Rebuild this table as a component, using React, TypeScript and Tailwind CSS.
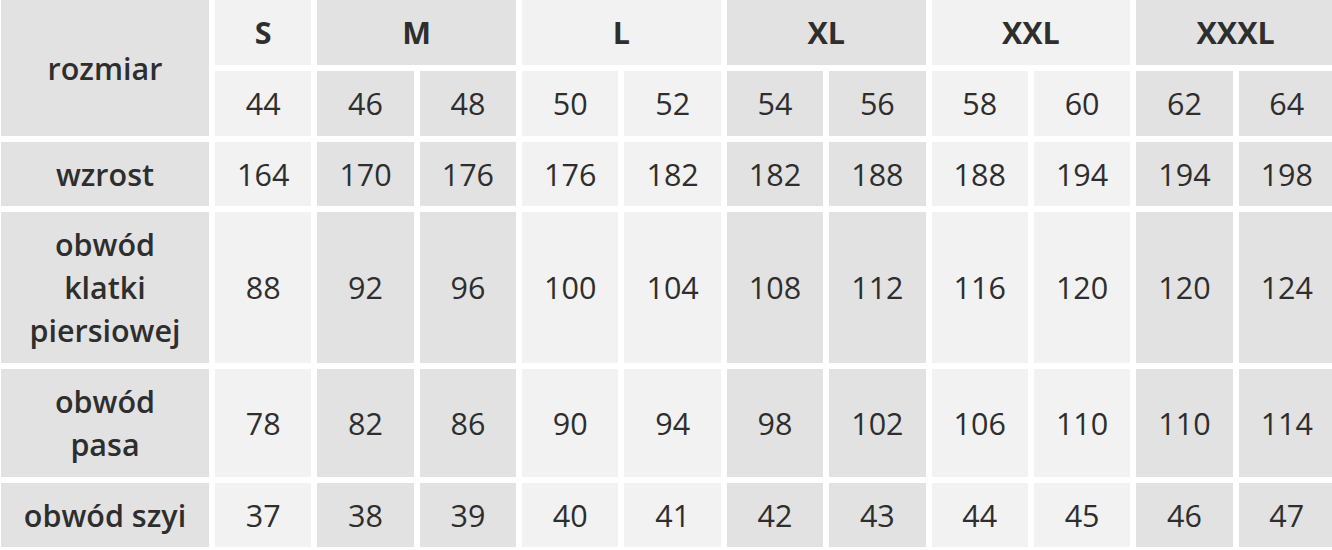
const sizes = [
  { label: "S", span: 1, light: true },
  { label: "M", span: 2, light: false },
  { label: "L", span: 2, light: true },
  { label: "XL", span: 2, light: false },
  { label: "XXL", span: 2, light: true },
  { label: "XXXL", span: 2, light: false },
];

const lightCols = [0, 3, 4, 7, 8];

const rows: { label: string[]; values: number[] }[] = [
  { label: ["wzrost"], values: [164, 170, 176, 176, 182, 182, 188, 188, 194, 194, 198] },
  { label: ["obwód", "klatki", "piersiowej"], values: [88, 92, 96, 100, 104, 108, 112, 116, 120, 120, 124] },
  { label: ["obwód", "pasa"], values: [78, 82, 86, 90, 94, 98, 102, 106, 110, 110, 114] },
  { label: ["obwód szyi"], values: [37, 38, 39, 40, 41, 42, 43, 44, 45, 46, 47] },
];

const euSizes = [44, 46, 48, 50, 52, 54, 56, 58, 60, 62, 64];

function cellBg(i: number) {
  return lightCols.includes(i) ? "bg-[#f2f2f2]" : "bg-[#e2e2e2]";
}

export default function App() {
  return (
    <div className="w-[1332px] h-[550px] overflow-hidden bg-white font-['Open_Sans',sans-serif] text-[#2e2e2e]">
      <div className="ml-[1px] grid w-[1334px] grid-cols-[208px_repeat(11,1fr)] grid-rows-[65px_65px_64px_151px_108px_64px] gap-[6px] text-center text-[30.5px] leading-[43px]">
        <div className="row-span-2 flex items-center justify-center bg-[#e2e2e2] font-semibold">
          rozmiar
        </div>
        {sizes.map((s) => (
          <div
            key={s.label}
            className={`flex items-center justify-center font-bold ${s.span === 2 ? "col-span-2" : ""} ${s.light ? "bg-[#f2f2f2]" : "bg-[#e2e2e2]"}`}
          >
            {s.label}
          </div>
        ))}
        {euSizes.map((n, i) => (
          <div key={n} className={`flex items-center justify-center ${cellBg(i)}`}>
            {n}
          </div>
        ))}
        {rows.map((row) => (
          <>
            <div key={row.label.join(" ")} className="flex flex-col items-center justify-center bg-[#e2e2e2] font-semibold">
              {row.label.map((l) => (
                <span key={l}>{l}</span>
              ))}
            </div>
            {row.values.map((v, i) => (
              <div key={i} className={`flex items-center justify-center ${cellBg(i)}`}>
                {v}
              </div>
            ))}
          </>
        ))}
      </div>
    </div>
  );
}
